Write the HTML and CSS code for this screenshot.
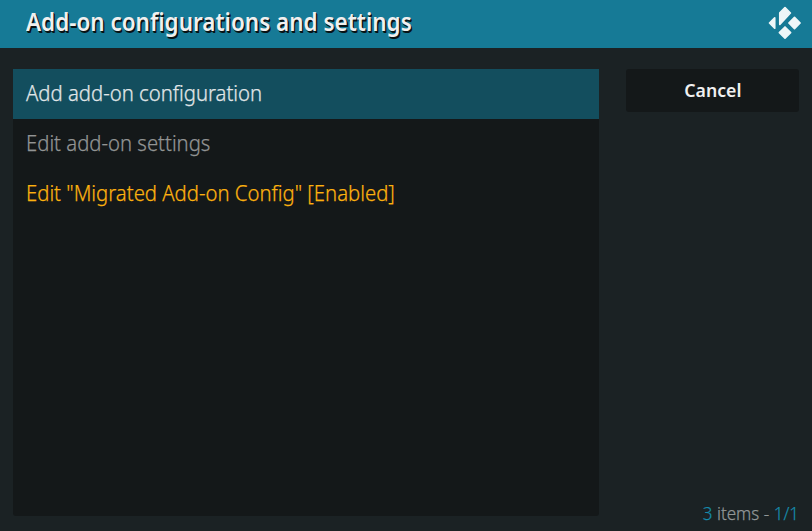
FILE: index.html
```html
<!DOCTYPE html>
<html lang="en">
<head>
<meta charset="utf-8">
<title>Add-on configurations and settings</title>
<link rel="stylesheet" href="styles.css">
</head>
<body>
<div class="dialog">
<header class="header">
<h1 class="title">Add-on configurations and settings</h1>
<svg class="logo" viewBox="0 0 34 34" width="34" height="34"><path d="M17 1.6L22.4 7 11.8 18.4V6.8zM6.7 11.8V22.2L1.5 17zM26.5 11.4L32.1 17l-5.6 5.6-5.6-5.6zM17 21l5.6 5.6-5.6 5.6-5.6-5.6z"/></svg>
</header>
<main class="content">
<ul class="list">
<li class="item item-focused"><span>Add add-on configuration</span></li>
<li class="item item-muted"><span>Edit add-on settings</span></li>
<li class="item item-enabled"><span>Edit "Migrated Add-on Config" [Enabled]</span></li>
</ul>
<aside class="side">
<button class="button"><span>Cancel</span></button>
<p class="count"><b>3</b> items - <b>1/1</b></p>
</aside>
</main>
</div>
</body>
</html>
```

FILE: styles.css
```css
* { box-sizing: border-box; margin: 0; padding: 0; }
body { font-family: "Noto Sans", sans-serif; background: #1b2224; }
.dialog { width: 812px; height: 531px; display: flex; flex-direction: column; overflow: hidden; }
.header { height: 48px; background: #167a96; display: flex; justify-content: space-between; padding: 6px 10px 0 26px; }
.title { font-size: 24.5px; line-height: 32px; font-weight: 600; color: #f0f0f0; text-shadow: 1px 1px 0 #081316, 1.5px 1.5px 0 #081316; white-space: nowrap; transform: scaleX(.917); transform-origin: left; }
.logo { fill: #eef6f8; stroke: #eef6f8; stroke-width: 1.7; stroke-linejoin: round; }
.content { flex: 1; display: flex; justify-content: space-between; padding: 21px 13px 4px; }
.list { width: 586px; height: 447px; list-style: none; background: #141819; border-radius: 0 0 3px 3px; }
.item { height: 50px; padding-left: 13px; font-size: 21.5px; line-height: 48px; font-weight: 300; white-space: nowrap; -webkit-text-stroke: .25px currentColor; }
.item span { display: inline-block; transform: scaleX(.944); transform-origin: left; }
.item-focused { background: #134e5e; color: #e0e6e8; }
.item-muted { color: #929494; }
.item-enabled { color: #fcb10f; }
.side { width: 173px; display: flex; flex-direction: column; justify-content: space-between; }
.button { height: 43px; padding-bottom: 2px; border: 0; border-radius: 3px; background: #141819; color: #f0f0f0; font: 600 18.5px/41px "Noto Sans", sans-serif; }
.button span { display: inline-block; transform: scaleX(.955); }
.count { text-align: right; font-size: 18.5px; line-height: 28px; font-weight: 300; color: #929697; white-space: nowrap; transform: scaleX(.92); transform-origin: right; -webkit-text-stroke: .25px currentColor; }
.count b { font-weight: inherit; color: #168aab; -webkit-text-stroke-color: #168aab; }
```
